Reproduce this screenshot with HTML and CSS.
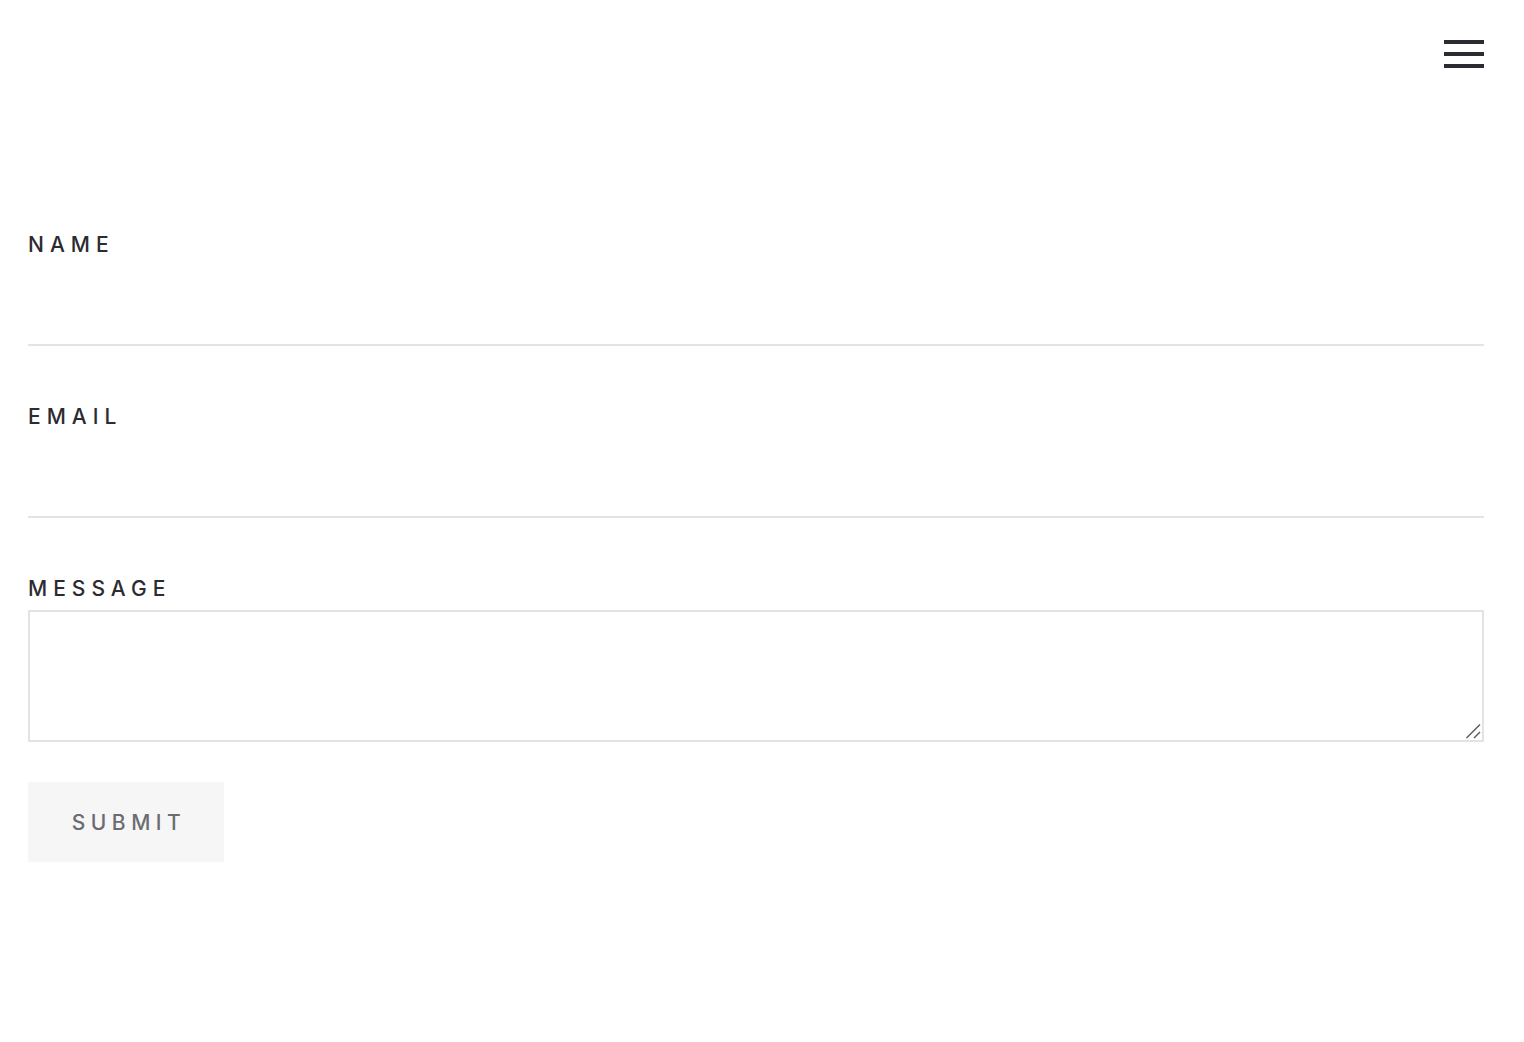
FILE: index.html
```html
<!DOCTYPE html>
<html lang="en">
<head>
<meta charset="utf-8">
<title>Contact</title>
<link rel="stylesheet" href="styles.css">
</head>
<body>
<header class="topbar">
  <button class="menu-btn" aria-label="Menu">
    <span class="bar"></span><span class="bar"></span><span class="bar"></span>
  </button>
</header>
<main class="content">
  <form class="contact-form">
    <div class="field">
      <label class="field-label" for="name">Name</label>
      <input class="line-input" id="name" type="text">
    </div>
    <div class="field">
      <label class="field-label" for="email">Email</label>
      <input class="line-input" id="email" type="email">
    </div>
    <div class="field field-message">
      <label class="field-label" for="message">Message</label>
      <div class="textarea-wrap">
        <textarea class="box-input" id="message"></textarea>
        <svg class="grip" width="16" height="16" viewBox="0 0 16 16" aria-hidden="true">
          <line x1="1.5" y1="15" x2="15" y2="1.5" stroke="#5a5a5e" stroke-width="1.4"/>
          <line x1="9" y1="15" x2="15" y2="9" stroke="#5a5a5e" stroke-width="1.4"/>
        </svg>
      </div>
    </div>
    <button class="submit-btn" type="button">Submit</button>
  </form>
</main>
</body>
</html>
```
FILE: styles.css
```css
* { box-sizing: border-box; }
html, body { margin: 0; padding: 0; background: #fff; }
body {
  font-family: Inter, "DejaVu Sans", sans-serif;
  color: #2b2b31;
}
.topbar {
  display: flex;
  justify-content: flex-end;
  padding: 40px 40px 0 28px;
  height: 232px;
}
.menu-btn {
  display: flex;
  flex-direction: column;
  gap: 8px;
  width: 40px;
  height: 28px;
  padding: 0;
  border: 0;
  background: transparent;
}
.bar {
  display: block;
  width: 40px;
  height: 4px;
  background: #2b2b31;
}
.content { padding: 0 40px 0 28px; }
.contact-form { display: flex; flex-direction: column; align-items: flex-start; }
.field { width: 100%; margin-bottom: 58px; }
.field-label {
  display: block;
  height: 24px;
  line-height: 26px;
  font-size: 21px;
  font-weight: 500;
  letter-spacing: 6px;
  text-transform: uppercase;
  color: #2b2b31;
}
.line-input {
  display: block;
  width: 100%;
  height: 90px;
  border: 0;
  border-bottom: 2px solid #e3e3e3;
  background: transparent;
  font: inherit;
  outline: none;
}
.field-message { margin-bottom: 40px; }
.field-message .field-label { margin-bottom: 10px; }
.textarea-wrap { position: relative; }
.box-input {
  display: block;
  width: 100%;
  height: 132px;
  border: 2px solid #e3e3e3;
  background: #fff;
  font: inherit;
  outline: none;
  resize: none;
}
.grip {
  position: absolute;
  right: 3px;
  bottom: 3px;
  pointer-events: none;
}
.submit-btn {
  width: 196px;
  height: 80px;
  border: 0;
  background: #f6f6f6;
  color: #6b6b71;
  font-family: inherit;
  font-size: 21px;
  font-weight: 500;
  letter-spacing: 5.5px;
  text-transform: uppercase;
  padding: 0 0 0 6px;
}
```
